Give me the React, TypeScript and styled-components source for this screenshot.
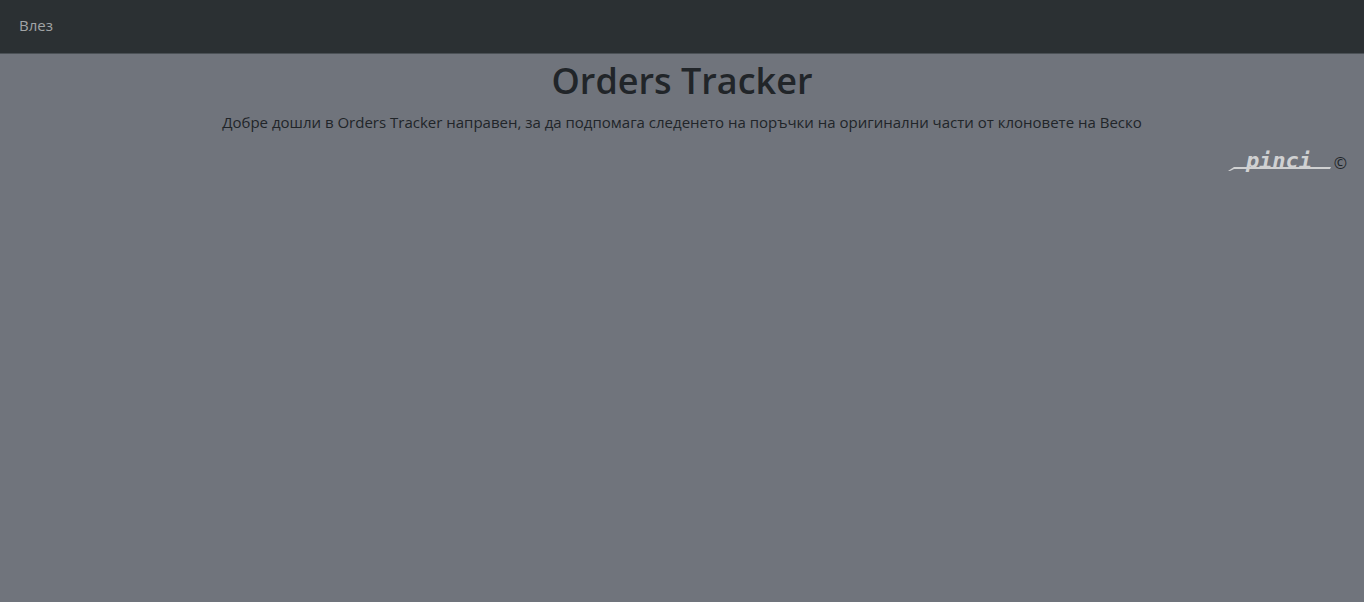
import React from "react";
import styled, { createGlobalStyle } from "styled-components";

const GlobalStyle = createGlobalStyle`
  * { box-sizing: border-box; }
  body {
    margin: 0;
    background: #70747c;
    color: #212529;
    font-family: "Open Sans", "Noto Sans", sans-serif;
    font-size: 15px;
    line-height: 24px;
  }
`;

const NavBar = styled.nav`
  display: flex;
  align-items: center;
  padding: 13px 19px 16px;
  background: #2b3033;
  border-bottom: 1px solid #4b5156;
`;

const NavLink = styled.a`
  color: #a1a4a6;
  text-decoration: none;
`;

const Welcome = styled.main`
  text-align: center;
`;

const Title = styled.h1`
  margin: 3px 0 5px;
  font-size: 36px;
  font-weight: 600;
  line-height: 48px;
`;

const Lead = styled.p`
  margin: 0 0 17px;
`;

const Footer = styled.footer`
  display: flex;
  justify-content: flex-end;
  align-items: center;
  gap: 3px;
  padding-right: 17px;
`;

const Wordmark = styled.svg`
  display: block;
  width: 104px;
  height: 24px;
  overflow: visible;
`;

const Copyright = styled.span`
  font-size: 16px;
`;

export default function App() {
  return (
    <>
      <GlobalStyle />
      <NavBar>
        <NavLink href="#login">Влез</NavLink>
      </NavBar>
      <Welcome>
        <Title>Orders Tracker</Title>
        <Lead>
          Добре дошли в Orders Tracker направен, за да подпомага следенето на
          поръчки на оригинални части от клоновете на Веско
        </Lead>
      </Welcome>
      <Footer>
        <Wordmark viewBox="0 0 104 24" role="img" aria-label="pinci">
          <text
            x="52"
            y="17"
            textAnchor="middle"
            fill="#d0d1d2"
            fontFamily="DejaVu Sans Mono, monospace"
            fontStyle="italic"
            fontWeight="700"
            fontSize="22"
          >
            pinci
          </text>
          <path d="M1 20L7 16H104L103 18H7L3 20Z" fill="#d0d1d2" />
        </Wordmark>
        <Copyright>©</Copyright>
      </Footer>
    </>
  );
}
